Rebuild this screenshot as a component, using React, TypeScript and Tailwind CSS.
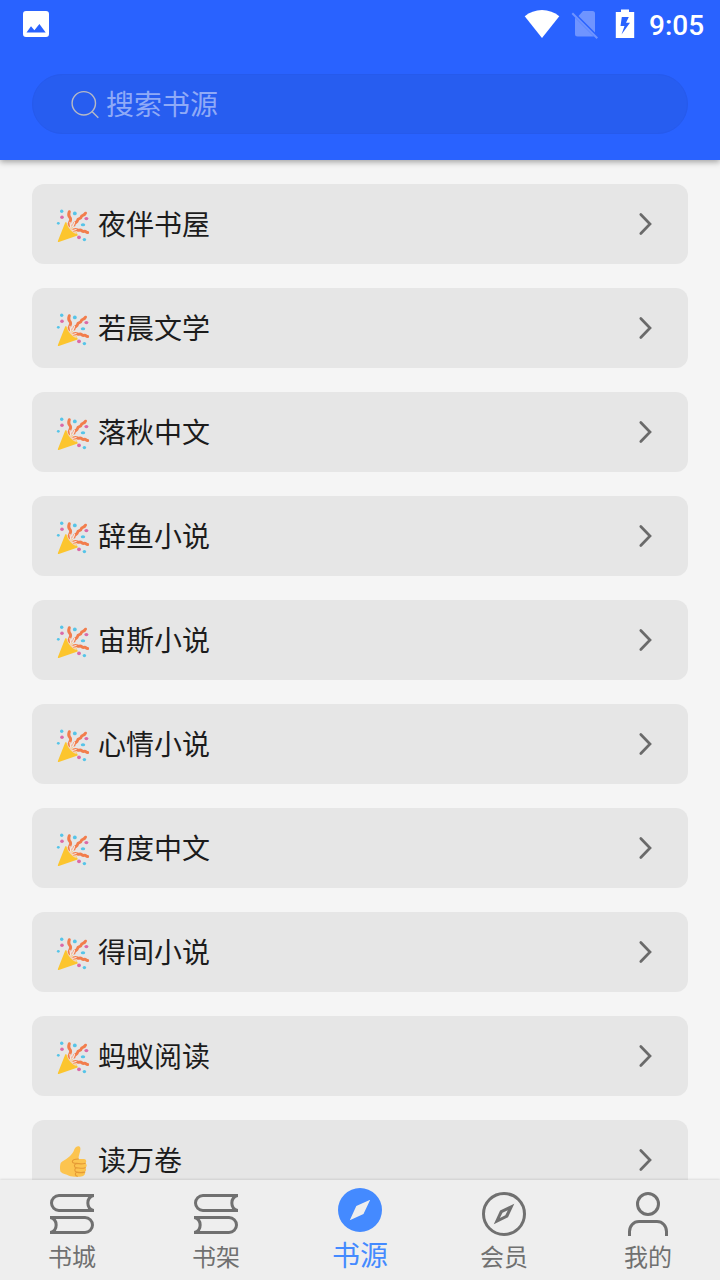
import React from 'react';
import { clsx } from 'clsx';

type IconProps = { className?: string };

const sources = [
  { name: '夜伴书屋', emoji: 'party' },
  { name: '若晨文学', emoji: 'party' },
  { name: '落秋中文', emoji: 'party' },
  { name: '辞鱼小说', emoji: 'party' },
  { name: '宙斯小说', emoji: 'party' },
  { name: '心情小说', emoji: 'party' },
  { name: '有度中文', emoji: 'party' },
  { name: '得间小说', emoji: 'party' },
  { name: '蚂蚁阅读', emoji: 'party' },
  { name: '读万卷', emoji: 'thumb' },
];

const PartyIcon: React.FC<IconProps> = ({ className }) => (
  <svg viewBox="0 0 36 36" className={className} fill="none">
    <path d="M9.300 14.300C10 13.800 14 16.600 17 20c3 3.300 5.200 6.700 4.600 7.500L2.800 34c-.7.200-1.100-.2-.9-.9z" fill="#fcc52e" />
    <path d="M10.500 14.600c2.500.9 9 7.400 10.400 11.200-2.500 1.200-10-6-10.400-11.200z" fill="#f3d3b4" />
    <path d="M14 17.500c-2.200-2.500 1.500-4.500.5-7s-3-2-1.200-6.800" stroke="#f27d4c" strokeWidth="3" strokeLinecap="round" />
    <path d="M18 17c-.2-3 3-1.800 3.500-4.500s3.200-1 3.700-3.500 2.800-.6 4.300-3.800" stroke="#f27d4c" strokeWidth="3" strokeLinecap="round" />
    <path d="M18 22c2.500-1.800 3.500.9 5.500.2s2.500 1.800 4.500 1.200 2 1.300 3.600 1.200" stroke="#f27d4c" strokeWidth="3" strokeLinecap="round" />
    <path d="m14 14.500.7 4.300M17.300 17.500l1.200-3M16.800 22.500l3.200-1" stroke="#f8e5dc" strokeWidth="1.300" strokeLinecap="round" />
    <g fill="#56c4e8">
      <circle cx="5.700" cy="3.300" r="1.700" />
      <circle cx="2.300" cy="15.300" r="1.400" />
      <circle cx="18.800" cy="5.400" r="1.900" />
      <ellipse cx="27" cy="16.700" rx="2.200" ry="1.500" />
      <circle cx="28.400" cy="31.600" r="1.700" />
    </g>
    <g fill="#db6aa8">
      <circle cx="6" cy="9.300" r="1.800" />
      <ellipse cx="30.400" cy="10.600" rx="2" ry="1.600" />
      <circle cx="23" cy="29.300" r="1.900" />
    </g>
  </svg>
);

const ThumbIcon: React.FC<IconProps> = ({ className }) => (
  <svg viewBox="0 0 36 36" className={className} fill="none">
    <path
      d="M17.500 7.500c.9-3 2.300-5.300 4.500-5.300 2.400 0 2.800 2.100 2.200 4.500-.7 3-1.700 5.500-1.700 8.300h5.500c2.300 0 3 3 1.300 4.300 2 1 1.700 3.700.1 4.500 1.200 1.400.8 3.500-.6 4.300.8 1.900-.3 3.600-2.300 4.100-4 1.100-10.500.8-13.500-.5-2.500-1.100-6.500-1.700-8.100-3.600-1.200-1.500-1.200-8 .2-9.700 4.100-2.900 9.100-5.200 12.400-10.900z"
      fill="#fcc44f"
    />
    <path
      d="M22.500 15c-3 0-6 .5-6.200 2.500 0 1.500 2 2 4.200 1.900m8.800-.1c-3 .8-6 .6-8.800.1-3 1-2.700 4-.1 4.400m9-.1c-3 .8-6 .7-9 .1-2.300 1-2 3.800.2 4.300m8.200 0c-2.800.7-5.600.6-8.200 0-2 1.200-1.500 3.500.7 4.200"
      stroke="#e59a35"
      strokeWidth="1.100"
      strokeLinecap="round"
    />
  </svg>
);

const BooksIcon: React.FC<IconProps> = ({ className }) => (
  <svg viewBox="0 0 44 44" className={className} fill="none" stroke="currentColor" strokeWidth="3">
    <path d="M44 3.500H9a7.500 7.500 0 0 0 0 15h35M43.500 3.500a7.800 7.800 0 0 0 0 15" />
    <path d="M0 25.500h35a7.500 7.500 0 0 1 0 15H0M.5 25.500a7.800 7.800 0 0 1 0 15" />
  </svg>
);

const CompassIcon: React.FC<IconProps> = ({ className }) => (
  <svg viewBox="0 0 44 44" className={className} fill="none" stroke="currentColor" strokeWidth="3">
    <circle cx="22" cy="22" r="20.500" />
    <path
      d="M32.300 11.700 26 25.300 11.800 32.300l6.300-13.700zM25.800 18.300l-5.300 2.500-2.600 5.200 5.400-2.700z"
      fill="currentColor"
      fillRule="evenodd"
      stroke="none"
    />
  </svg>
);

const CompassFilledIcon: React.FC<IconProps> = ({ className }) => (
  <svg viewBox="0 0 44 44" className={className}>
    <path
      d="M22 0a22 22 0 1 0 0 44 22 22 0 0 0 0-44zM32.200 11.800 25.500 26 11.800 32.200l6.500-14.100z"
      fill="currentColor"
      fillRule="evenodd"
    />
  </svg>
);

const UserIcon: React.FC<IconProps> = ({ className }) => (
  <svg viewBox="0 0 44 44" className={className} fill="none" stroke="currentColor" strokeWidth="3">
    <circle cx="22" cy="12" r="10.500" />
    <path d="M3.500 44v-4.500c0-5.500 4-10 9.500-10h18c5.500 0 9.500 4.500 9.500 10V44" />
  </svg>
);

const tabs = [
  { label: '书城', icon: BooksIcon },
  { label: '书架', icon: BooksIcon },
  { label: '书源', icon: CompassFilledIcon, active: true },
  { label: '会员', icon: CompassIcon },
  { label: '我的', icon: UserIcon },
];

const StatusBar: React.FC = () => (
  <div className="flex h-12 items-center justify-between pr-4 pl-[23px] text-white">
    <svg viewBox="0 0 26 26" className="size-[26px]" fill="currentColor">
      <path
        d="M3 0h20a3 3 0 0 1 3 3v20a3 3 0 0 1-3 3H3a3 3 0 0 1-3-3V3a3 3 0 0 1 3-3zm.5 21.500h19.200L16.400 13l-5 6.300L8 15.200z"
        fillRule="evenodd"
      />
    </svg>
    <div className="flex items-center">
      <svg viewBox="0 0 36 30" className="h-[30px] w-9" fill="currentColor">
        <path d="M18 29 .7 7.200C5.500 3.300 11.500 1 18 1s12.500 2.300 17.300 6.200z" />
      </svg>
      <svg viewBox="0 0 28 30" className="ml-[11px] h-[30px] w-7" fill="none">
        <path d="m4 8.500 19 19H6.500A2.500 2.500 0 0 1 4 25zM12 2h9.500A2.500 2.500 0 0 1 24 4.500v19L7.500 7z" fill="#6f94ff" />
        <path d="m1.300 4.200 25 25" stroke="#6f94ff" strokeWidth="2" />
      </svg>
      <svg viewBox="0 0 20 30" className="ml-4 h-[30px] w-5" fill="currentColor">
        <path
          d="M6 .4h8V3h5.200v26H.8V3H6zM6.800 8 5.500 17h4L6.500 25.500 15 13.800h-4L13.800 8z"
          fillRule="evenodd"
        />
      </svg>
      <span className="ml-[14px] w-[55px] pt-1 font-[Roboto] text-[28px] leading-[30px] font-medium">9:05</span>
    </div>
  </div>
);

const App: React.FC = () => (
  <div className="flex h-[1280px] w-[720px] flex-col overflow-hidden bg-[#f5f5f5] font-['Noto_Sans_CJK_SC',sans-serif]">
    <header className="z-10 h-40 shrink-0 bg-[#2962ff] shadow-[0_2px_6px_rgba(0,0,0,0.35)]">
      <StatusBar />
      <div className="mx-8 mt-[26px] flex h-[60px] items-center rounded-full border border-[#265aec] bg-[#275df0] pl-[38px]">
        <svg viewBox="0 0 30 30" className="size-[30px]" fill="none" stroke="#b7bac5" strokeWidth="1.400">
          <circle cx="12.800" cy="14.300" r="11.700" />
          <path d="m21 22.500 6.300 6.300" />
        </svg>
        <span className="ml-[5px] pb-0.5 text-[28px] leading-[40px] text-[#8faaf7]">搜索书源</span>
      </div>
    </header>

    <main className="flex min-h-0 flex-1 flex-col gap-6 overflow-hidden px-8 pt-6">
      {sources.map(({ name, emoji }) => (
        <div key={name} className="flex h-20 shrink-0 items-center rounded-xl bg-[#e6e6e6] pr-[35px] pl-6">
          {emoji === 'party' ? (
            <PartyIcon className="mt-1 size-9 shrink-0" />
          ) : (
            <ThumbIcon className="mt-1 size-9 shrink-0" />
          )}
          <span className="ml-1.5 flex-1 pb-0.5 text-[28px] leading-10 text-[#1c1c1c]">{name}</span>
          <svg viewBox="0 0 16 24" className="h-6 w-4" fill="none" stroke="#6a6a6a" strokeWidth="2.700" strokeLinecap="round">
            <path d="m3.800 2.500 9.200 9.500-9.200 9.500" />
          </svg>
        </div>
      ))}
    </main>

    <nav className="z-10 flex h-[100px] shrink-0 bg-[#eee] shadow-[0_-1px_2px_rgba(0,0,0,0.1)]">
      {tabs.map(({ label, icon: Icon, active }) => (
        <div
          key={label}
          className={clsx(
            'flex flex-1 flex-col items-center',
            active ? 'pt-2 text-[28px] text-[#448aff]' : 'pt-3 text-2xl text-[#707070]'
          )}
        >
          <Icon className="size-11" />
          <span className={clsx(active ? 'mt-0.5 leading-10' : 'mt-[3px] leading-[34px]')}>{label}</span>
        </div>
      ))}
    </nav>
  </div>
);

export default App;
